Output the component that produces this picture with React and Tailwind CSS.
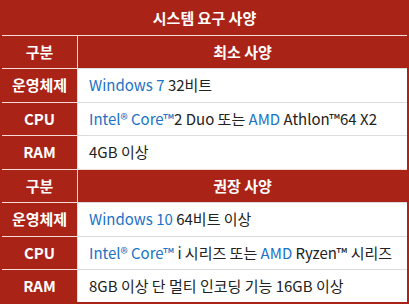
import React from "react";

const B = ({ children }) => <span className="text-[#1b72c6]">{children}</span>;

function Row({ label, children, h, header }) {
  return (
    <div className={`flex ${h}`}>
      <div className="w-[76px] shrink-0 flex items-center justify-center border-r border-r-[#f3dcd8] border-t border-t-[#f3dcd8] text-white font-bold text-[15px]">
        {label}
      </div>
      {header ? (
        <div className="flex-1 flex items-center justify-center text-white font-bold text-[15px] border-t border-t-[#f3dcd8]">
          {children}
        </div>
      ) : (
        <div className="flex-1 flex items-center bg-white pl-[11px] text-[15px] text-[#222] border-t border-t-[#dcdcdc]">
          {children}
        </div>
      )}
    </div>
  );
}

export default function App() {
  return (
    <div
      className="w-[409px] h-[304px] bg-[#aa2317] p-[2px] flex flex-col"
      style={{ fontFamily: '"Noto Sans CJK KR", "Noto Sans", sans-serif' }}
    >
      <div className="h-[33px] flex items-center justify-center text-white font-bold text-[15px]">
        시스템 요구 사양
      </div>
      <Row label="구분" h="h-[33px]" header>최소 사양</Row>
      <Row label="운영체제" h="h-[34px]">
        <span><B>Windows 7</B> 32비트</span>
      </Row>
      <Row label="CPU" h="h-[33px]">
        <span><B>Intel® Core™</B>2 Duo 또는 <B>AMD</B> Athlon™64 X2</span>
      </Row>
      <Row label="RAM" h="h-[34px]">
        <span>4GB 이상</span>
      </Row>
      <Row label="구분" h="h-[33px]" header>권장 사양</Row>
      <Row label="운영체제" h="h-[34px]">
        <span><B>Windows 10</B> 64비트 이상</span>
      </Row>
      <Row label="CPU" h="h-[33px]">
        <span><B>Intel® Core™</B> i 시리즈 또는 <B>AMD</B> Ryzen™ 시리즈</span>
      </Row>
      <Row label="RAM" h="h-[33px]">
        <span>8GB 이상 단 멀티 인코딩 기능 16GB 이상</span>
      </Row>
    </div>
  );
}
